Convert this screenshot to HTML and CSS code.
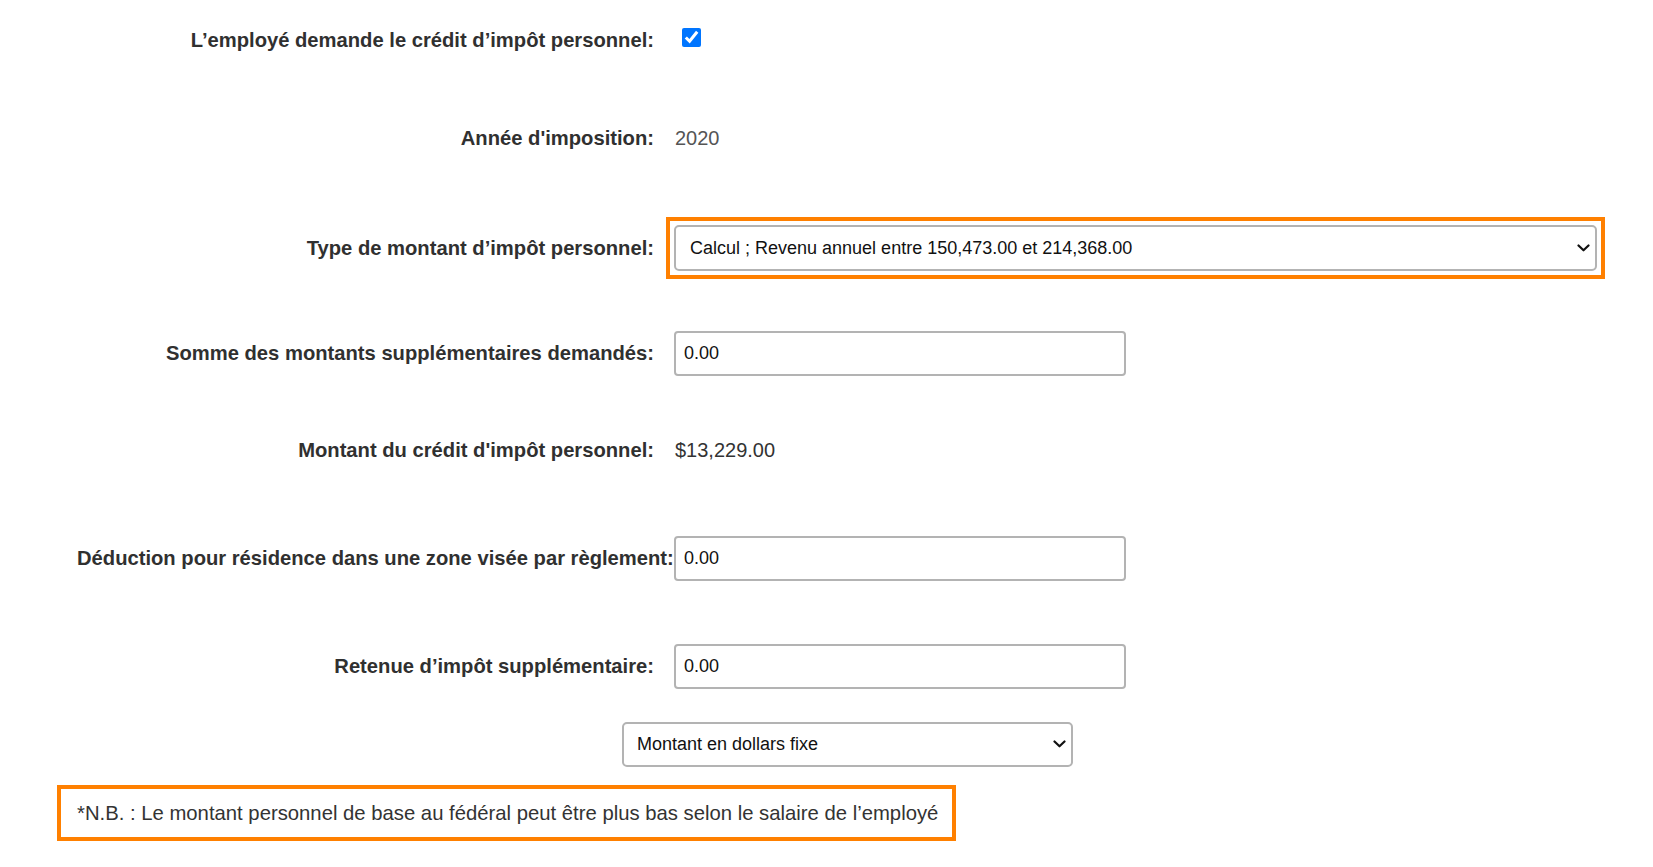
FILE: index.html
```html
<!DOCTYPE html>
<html lang="fr">
<head>
<meta charset="utf-8">
<title>Crédit d'impôt personnel</title>
<link rel="stylesheet" href="styles.css">
</head>
<body>
<form class="form">
  <div class="row row-first">
    <label class="label" for="claim">L’employé demande le crédit d’impôt personnel:</label>
    <div class="field"><input id="claim" class="check" type="checkbox" checked></div>
  </div>
  <div class="row gap-52">
    <span class="label">Année d'imposition:</span>
    <div class="field"><span class="value value-muted">2020</span></div>
  </div>
  <div class="row gap-64">
    <label class="label" for="type">Type de montant d’impôt personnel:</label>
    <div class="field">
      <div class="select-wrap select-wide highlight">
        <select id="type" class="select">
          <option>Calcul ; Revenu annuel entre 150,473.00 et 214,368.00</option>
        </select>
        <svg class="chevron" width="13" height="8" viewBox="0 0 13 8"><path d="M1.5 1.5 L6.5 6.3 L11.5 1.5" fill="none" stroke="#111" stroke-width="2.2" stroke-linecap="round" stroke-linejoin="round"/></svg>
      </div>
    </div>
  </div>
  <div class="row gap-60">
    <label class="label" for="somme">Somme des montants supplémentaires demandés:</label>
    <div class="field"><input id="somme" class="input" type="text" value="0.00"></div>
  </div>
  <div class="row gap-51">
    <span class="label">Montant du crédit d'impôt personnel:</span>
    <div class="field"><span class="value">$13,229.00</span></div>
  </div>
  <div class="row gap-62">
    <label class="label" for="zone">Déduction pour résidence dans une zone visée par règlement:</label>
    <div class="field"><input id="zone" class="input" type="text" value="0.00"></div>
  </div>
  <div class="row gap-62">
    <label class="label" for="retenue">Retenue d’impôt supplémentaire:</label>
    <div class="field"><input id="retenue" class="input" type="text" value="0.00"></div>
  </div>
  <div class="row gap-32 row-indent">
    <div class="select-wrap select-narrow">
      <select class="select select-sm" aria-label="Type de retenue">
        <option>Montant en dollars fixe</option>
      </select>
      <svg class="chevron" width="13" height="8" viewBox="0 0 13 8"><path d="M1.5 1.5 L6.5 6.3 L11.5 1.5" fill="none" stroke="#111" stroke-width="2.2" stroke-linecap="round" stroke-linejoin="round"/></svg>
    </div>
  </div>
  <p class="note">*N.B. : Le montant personnel de base au fédéral peut être plus bas selon le salaire de l’employé</p>
</form>
</body>
</html>
```

FILE: styles.css
```css
html, body {
  margin: 0;
  padding: 0;
  background: #ffffff;
}

body {
  font-family: "Liberation Sans", Arial, sans-serif;
  color: #333333;
}

.form {
  display: flex;
  flex-direction: column;
  padding: 0 0 0 57px;
  margin: 0;
}

.row {
  display: flex;
  align-items: center;
  min-height: 46px;
}

.row-first { margin-top: 17px; }
.gap-52 { margin-top: 52px; }
.gap-64 { margin-top: 64px; }
.gap-60 { margin-top: 59px; }
.gap-51 { margin-top: 51px; }
.gap-62 { margin-top: 62px; }
.gap-32 { margin-top: 32px; }

.label {
  flex: none;
  width: 597px;
  padding-left: 20px;
  box-sizing: border-box;
  text-align: right;
  white-space: nowrap;
  font-size: 20.2px;
  font-weight: bold;
  color: #303030;
  line-height: 24px;
}

.field {
  flex: none;
  margin-left: 20px;
  display: flex;
  align-items: center;
}

.check {
  width: 19px;
  height: 19px;
  margin: -6px 0 0 8px;
  accent-color: #0075ff;
}

.value {
  font-size: 20px;
  line-height: 24px;
  color: #333333;
  padding-left: 1px;
}

.value-muted {
  color: #555555;
}

.input {
  width: 452px;
  height: 45px;
  box-sizing: border-box;
  border: 2px solid #b3b3b3;
  border-radius: 4px;
  padding: 0 8px;
  font-family: "Liberation Sans", Arial, sans-serif;
  font-size: 18px;
  color: #111111;
  background: #ffffff;
  outline: none;
}

.select-wrap {
  position: relative;
  display: flex;
}

.select-wide { width: 923px; }
.select-narrow { width: 451px; }

.highlight {
  outline: 4px solid #ff8000;
  outline-offset: 4px;
}

.select {
  -webkit-appearance: none;
  appearance: none;
  width: 100%;
  height: 46px;
  box-sizing: border-box;
  border: 2px solid #b3b3b3;
  border-radius: 5px;
  padding: 0 40px 0 14px;
  font-family: "Liberation Sans", Arial, sans-serif;
  font-size: 18px;
  color: #111111;
  background: #ffffff;
}

.select-sm {
  height: 45px;
  padding-left: 13px;
}

.chevron {
  position: absolute;
  right: 7px;
  top: 50%;
  margin-top: -4px;
  pointer-events: none;
}

.row-indent {
  padding-left: 565px;
}

.note {
  align-self: flex-start;
  width: 899px;
  height: 56px;
  box-sizing: border-box;
  margin: 18px 0 0 0;
  border: 4px solid #ff8000;
  padding: 0 4px 0 16px;
  display: flex;
  align-items: center;
  white-space: nowrap;
  font-size: 20.3px;
  color: #333333;
}
```
